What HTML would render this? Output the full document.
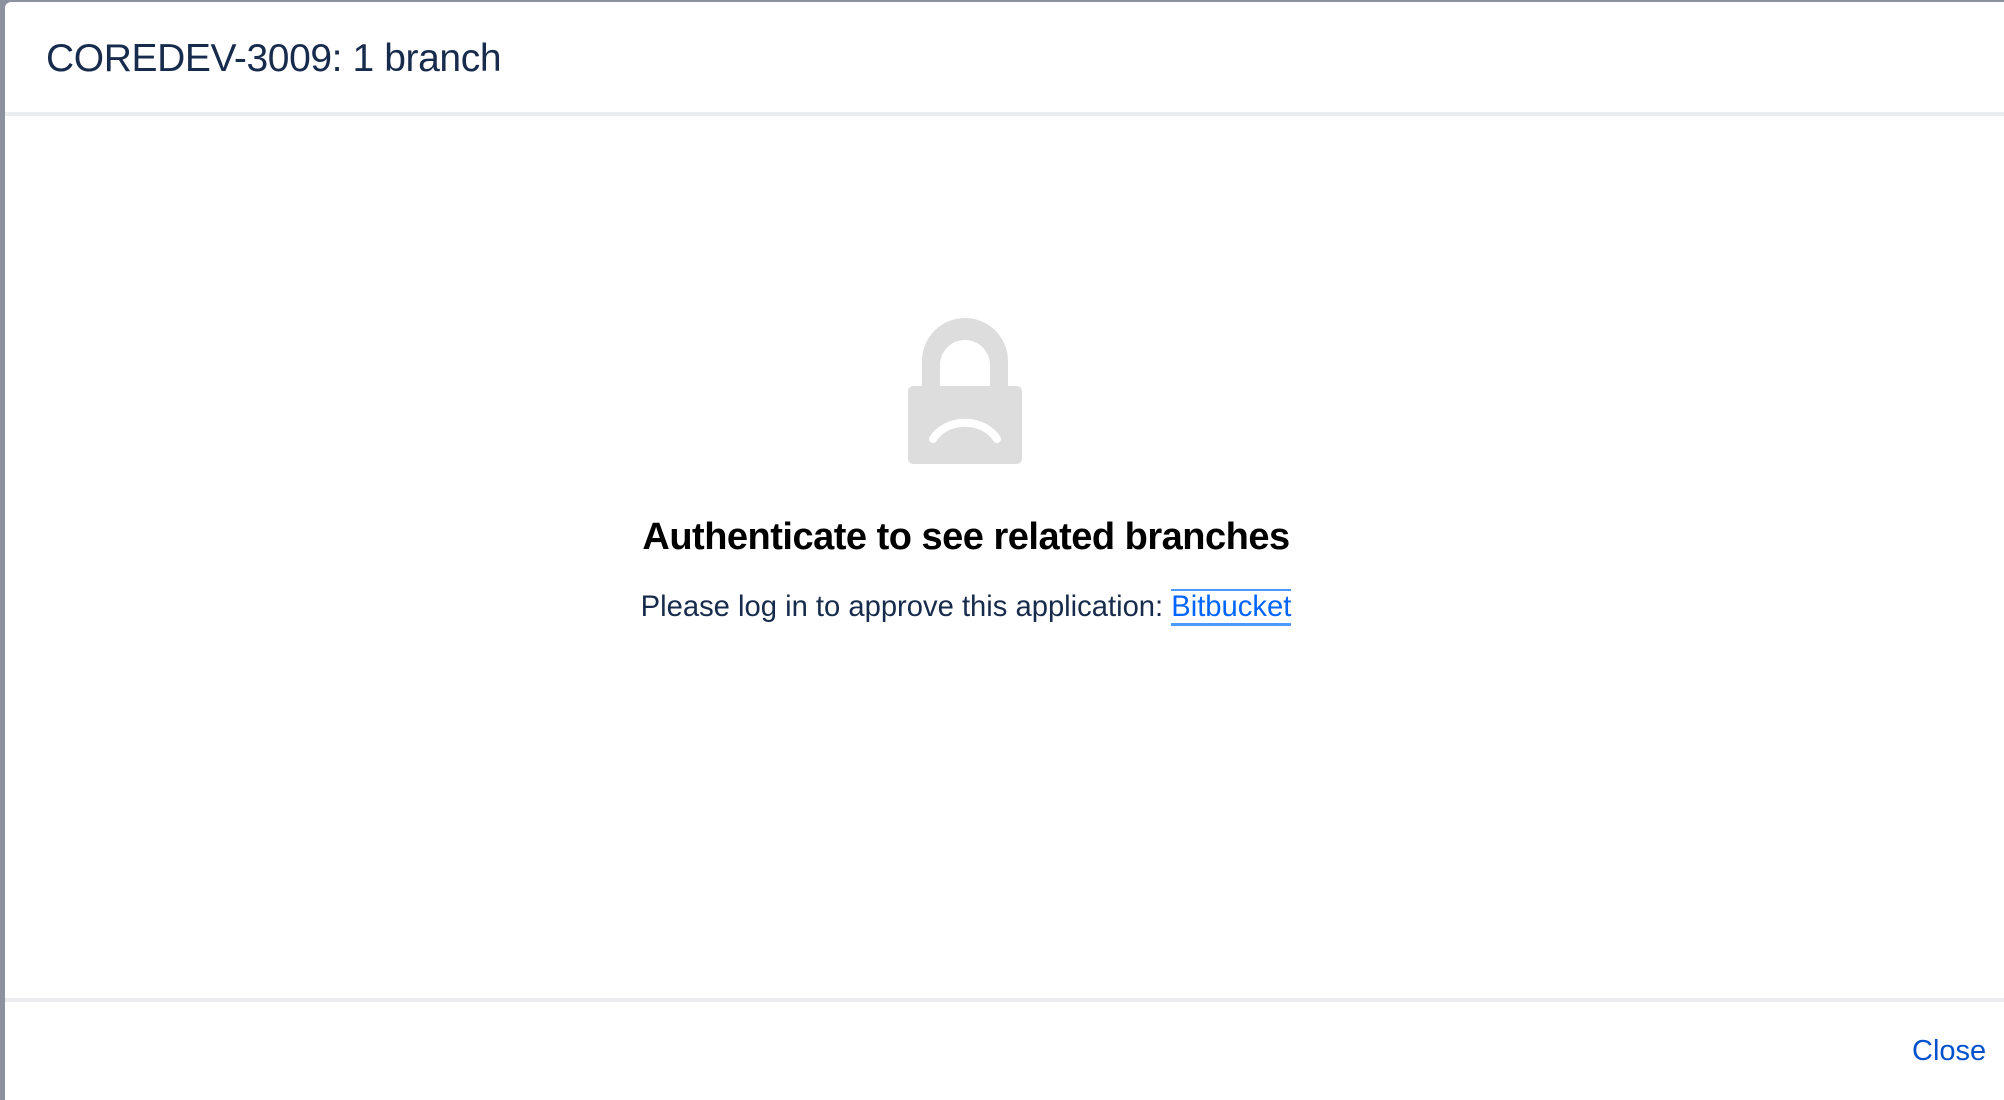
<!DOCTYPE html>
<html><head><style>
html,body{margin:0;padding:0;width:2004px;height:1100px;overflow:hidden;background:#8b919e;font-family:"Liberation Sans",Arial,sans-serif;}
.dlg{position:absolute;left:5px;top:2px;width:2004px;height:1098px;background:#fff;border-radius:6px 0 0 0;}
.title{position:absolute;left:41px;top:35px;font-size:39px;color:#172b4d;letter-spacing:-0.4px;}
.sep1{position:absolute;left:0;right:0;top:110px;height:4px;background:#ebecf0;}
.sep2{position:absolute;left:0;right:0;top:996px;height:4px;background:#ebecf0;}
.lock{position:absolute;left:903px;top:313px;}
h2{position:absolute;left:0;width:1922px;text-align:center;top:514px;margin:0;font-size:38px;font-weight:bold;color:#000;letter-spacing:-0.5px;}
.p{position:absolute;left:0;width:1922px;text-align:center;top:589px;font-size:29.2px;color:#172b4d;}
.p a{color:#0065ff;text-decoration:none;border-top:2px solid #4c9aff;border-bottom:3px solid #4c9aff;}
.close{position:absolute;left:1907px;top:1033px;font-size:29px;color:#0052cc;}
</style></head><body>
<div class="dlg">
<div class="title">COREDEV-3009: 1 branch</div>
<div class="sep1"></div>
<svg class="lock" width="114" height="150" viewBox="0 0 114 150">
<path d="M14 74 V46 A43 43 0 0 1 100 46 V74 H82 V50 A25 25 0 0 0 32 50 V74 Z" fill="#dddddd"/>
<rect x="0" y="71" width="114" height="78" rx="5" fill="#dddddd"/>
<path d="M25 124 A36 30 0 0 1 89 124" stroke="#fff" stroke-width="8" stroke-linecap="round" fill="none"/>
</svg>
<h2>Authenticate to see related branches</h2>
<div class="p">Please log in to approve this application: <a>Bitbucket</a></div>
<div class="sep2"></div>
<div class="close">Close</div>
</div>
</body></html>
